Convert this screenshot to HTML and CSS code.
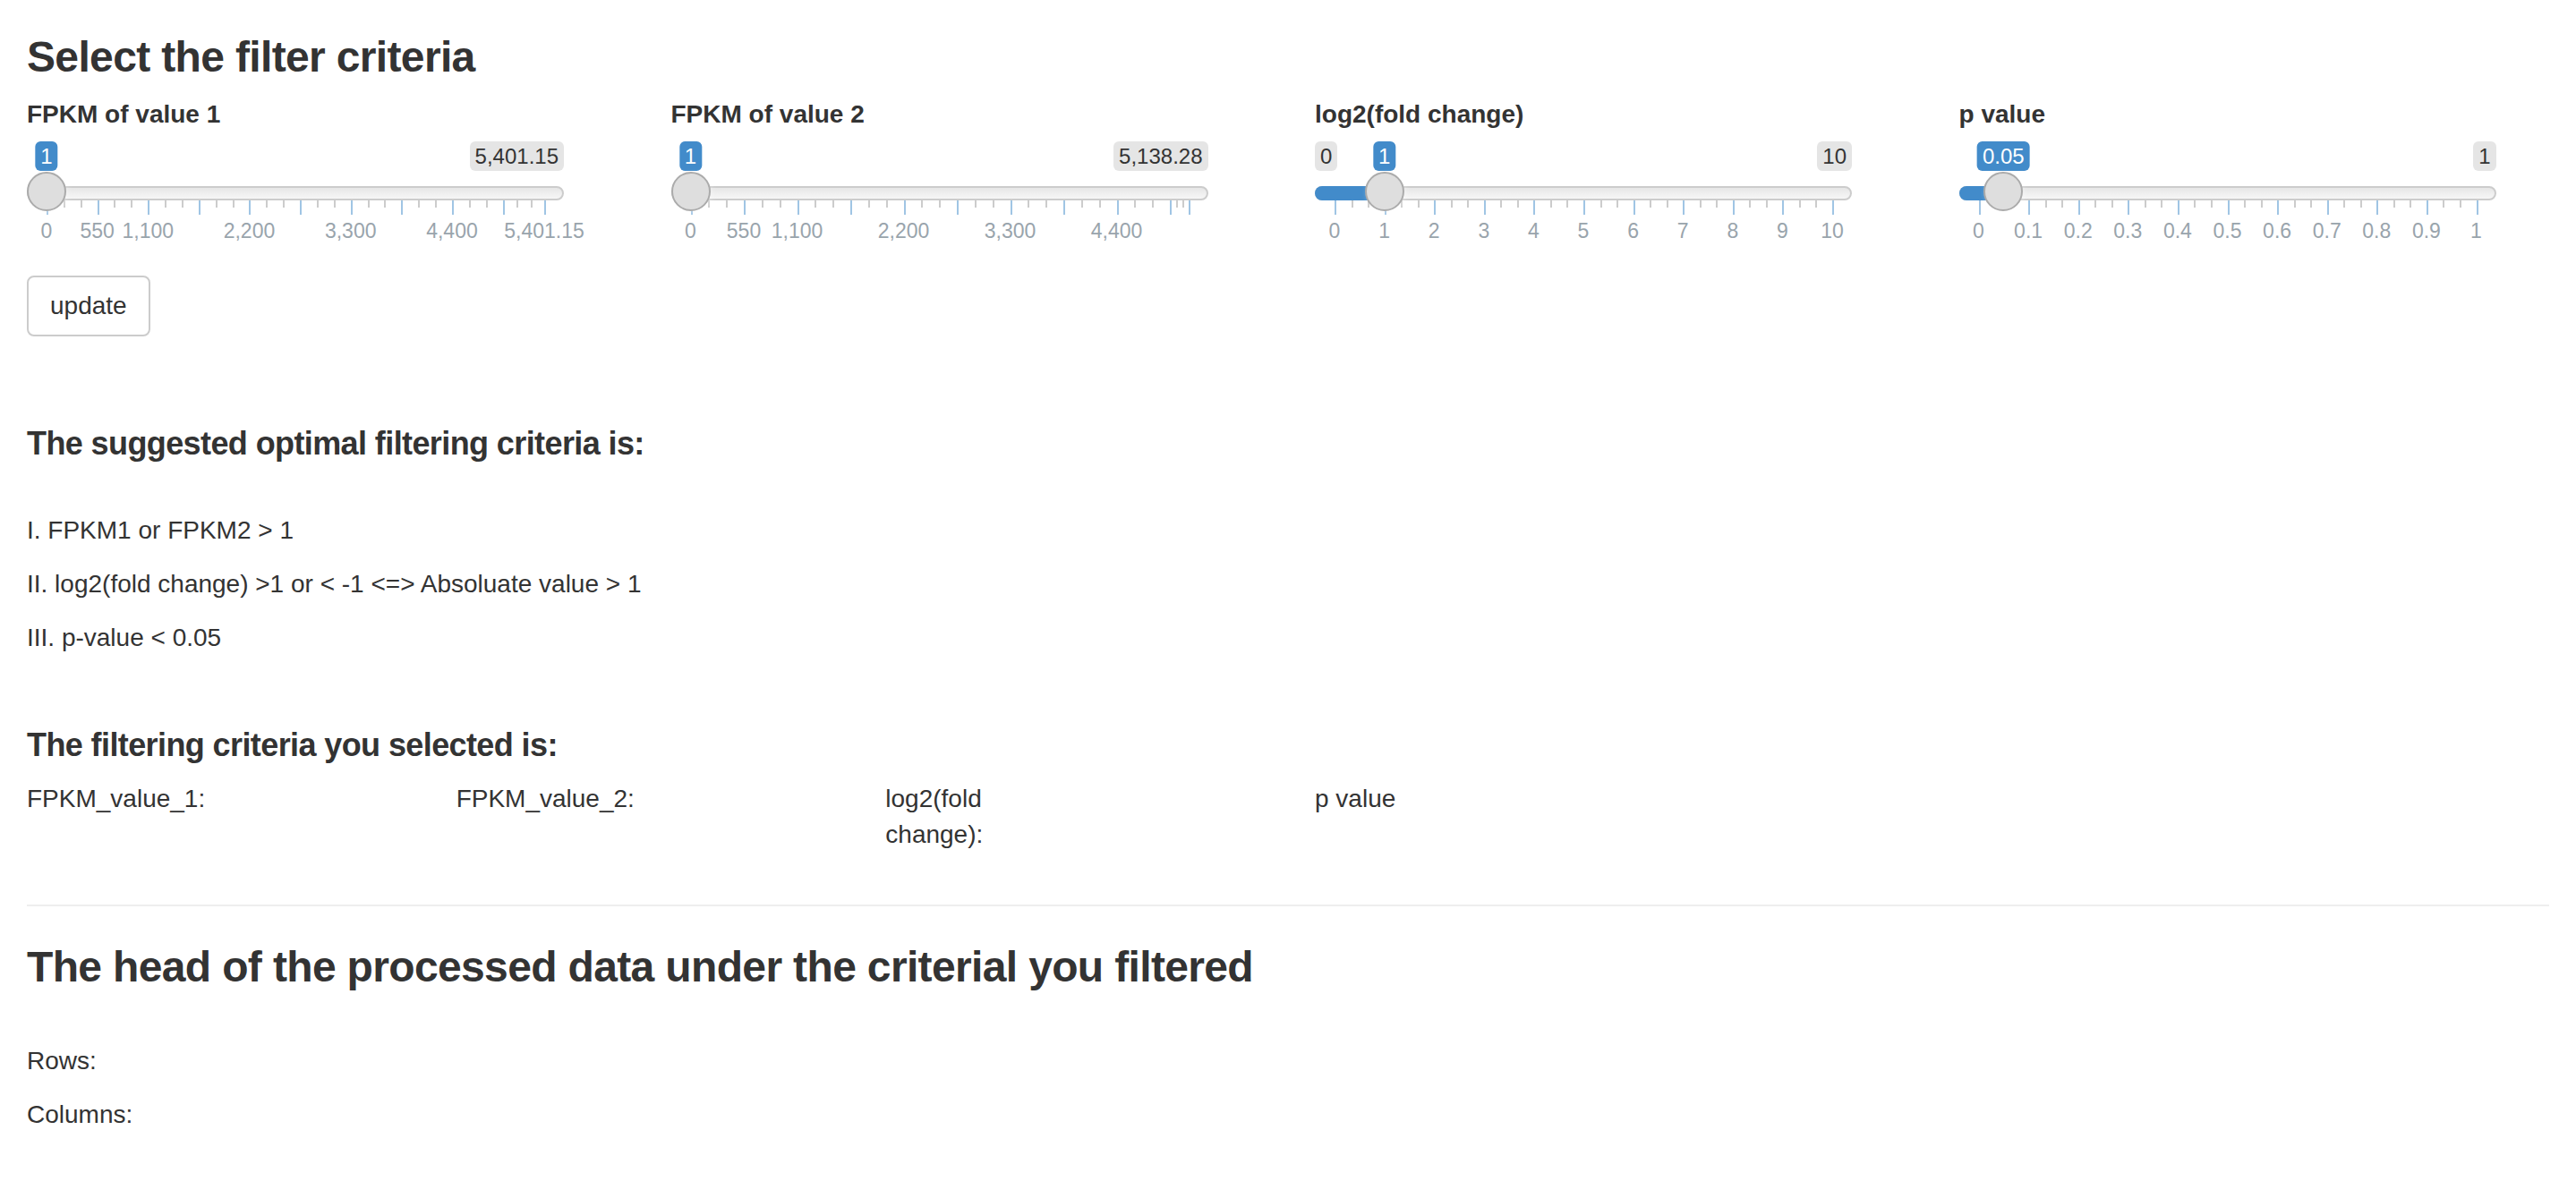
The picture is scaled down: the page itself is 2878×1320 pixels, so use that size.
FILE: index.html
```html
<!DOCTYPE html>
<html lang="en">
<head>
<meta charset="utf-8">
<title>Filter criteria</title>
<link rel="stylesheet" href="styles.css">
</head>
<body>
<div class="page">
  <h3 class="title">Select the filter criteria</h3>

  <div class="slider-row">
    <div class="slider-col">
      <div class="field">
        <label class="field-label">FPKM of value 1</label>
        <div class="irs">
          <span class="irs-line"></span>
          <span class="irs-max">5,401.15</span>
          <span class="irs-single" style="left:22px">1</span>
          <span class="irs-handle" style="left:0px"></span>
          <span class="irs-grid">
            <span class="tick" style="left:0%"></span>
            <span class="tick small" style="left:3.394%"></span>
            <span class="tick small" style="left:6.789%"></span>
            <span class="tick" style="left:10.183%"></span>
            <span class="tick small" style="left:13.577%"></span>
            <span class="tick small" style="left:16.972%"></span>
            <span class="tick" style="left:20.366%"></span>
            <span class="tick small" style="left:23.760%"></span>
            <span class="tick small" style="left:27.155%"></span>
            <span class="tick" style="left:30.549%"></span>
            <span class="tick small" style="left:33.943%"></span>
            <span class="tick small" style="left:37.338%"></span>
            <span class="tick" style="left:40.732%"></span>
            <span class="tick small" style="left:44.126%"></span>
            <span class="tick small" style="left:47.521%"></span>
            <span class="tick" style="left:50.915%"></span>
            <span class="tick small" style="left:54.309%"></span>
            <span class="tick small" style="left:57.704%"></span>
            <span class="tick" style="left:61.098%"></span>
            <span class="tick small" style="left:64.492%"></span>
            <span class="tick small" style="left:67.887%"></span>
            <span class="tick" style="left:71.281%"></span>
            <span class="tick small" style="left:74.675%"></span>
            <span class="tick small" style="left:78.070%"></span>
            <span class="tick" style="left:81.464%"></span>
            <span class="tick small" style="left:84.858%"></span>
            <span class="tick small" style="left:88.253%"></span>
            <span class="tick" style="left:91.647%"></span>
            <span class="tick small" style="left:94.431%"></span>
            <span class="tick small" style="left:97.216%"></span>
            <span class="tick" style="left:100%"></span>
            <span class="tick-label" style="left:0%">0</span>
            <span class="tick-label" style="left:10.183%">550</span>
            <span class="tick-label" style="left:20.366%">1,100</span>
            <span class="tick-label" style="left:40.732%">2,200</span>
            <span class="tick-label" style="left:61.098%">3,300</span>
            <span class="tick-label" style="left:81.464%">4,400</span>
            <span class="tick-label" style="left:100%">5,401.15</span>
          </span>
        </div>
      </div>
    </div>

    <div class="slider-col">
      <div class="field">
        <label class="field-label">FPKM of value 2</label>
        <div class="irs">
          <span class="irs-line"></span>
          <span class="irs-max">5,138.28</span>
          <span class="irs-single" style="left:22px">1</span>
          <span class="irs-handle" style="left:0px"></span>
          <span class="irs-grid">
            <span class="tick" style="left:0%"></span>
            <span class="tick small" style="left:3.568%"></span>
            <span class="tick small" style="left:7.136%"></span>
            <span class="tick" style="left:10.704%"></span>
            <span class="tick small" style="left:14.272%"></span>
            <span class="tick small" style="left:17.840%"></span>
            <span class="tick" style="left:21.408%"></span>
            <span class="tick small" style="left:24.976%"></span>
            <span class="tick small" style="left:28.544%"></span>
            <span class="tick" style="left:32.112%"></span>
            <span class="tick small" style="left:35.680%"></span>
            <span class="tick small" style="left:39.248%"></span>
            <span class="tick" style="left:42.816%"></span>
            <span class="tick small" style="left:46.384%"></span>
            <span class="tick small" style="left:49.952%"></span>
            <span class="tick" style="left:53.520%"></span>
            <span class="tick small" style="left:57.088%"></span>
            <span class="tick small" style="left:60.656%"></span>
            <span class="tick" style="left:64.224%"></span>
            <span class="tick small" style="left:67.792%"></span>
            <span class="tick small" style="left:71.360%"></span>
            <span class="tick" style="left:74.928%"></span>
            <span class="tick small" style="left:78.496%"></span>
            <span class="tick small" style="left:82.064%"></span>
            <span class="tick" style="left:85.632%"></span>
            <span class="tick small" style="left:89.200%"></span>
            <span class="tick small" style="left:92.768%"></span>
            <span class="tick" style="left:96.336%"></span>
            <span class="tick small" style="left:97.557%"></span>
            <span class="tick small" style="left:98.779%"></span>
            <span class="tick" style="left:100%"></span>
            <span class="tick-label" style="left:0%">0</span>
            <span class="tick-label" style="left:10.704%">550</span>
            <span class="tick-label" style="left:21.408%">1,100</span>
            <span class="tick-label" style="left:42.816%">2,200</span>
            <span class="tick-label" style="left:64.224%">3,300</span>
            <span class="tick-label" style="left:85.632%">4,400</span>
          </span>
        </div>
      </div>
    </div>

    <div class="slider-col">
      <div class="field">
        <label class="field-label">log2(fold change)</label>
        <div class="irs">
          <span class="irs-line"></span>
          <span class="irs-bar" style="width:77.6px"></span>
          <span class="irs-min">0</span>
          <span class="irs-max">10</span>
          <span class="irs-single" style="left:77.6px">1</span>
          <span class="irs-handle" style="left:55.6px"></span>
          <span class="irs-grid">
            <span class="tick" style="left:0%"></span>
            <span class="tick small" style="left:3.333%"></span>
            <span class="tick small" style="left:6.667%"></span>
            <span class="tick" style="left:10%"></span>
            <span class="tick small" style="left:13.333%"></span>
            <span class="tick small" style="left:16.667%"></span>
            <span class="tick" style="left:20%"></span>
            <span class="tick small" style="left:23.333%"></span>
            <span class="tick small" style="left:26.667%"></span>
            <span class="tick" style="left:30%"></span>
            <span class="tick small" style="left:33.333%"></span>
            <span class="tick small" style="left:36.667%"></span>
            <span class="tick" style="left:40%"></span>
            <span class="tick small" style="left:43.333%"></span>
            <span class="tick small" style="left:46.667%"></span>
            <span class="tick" style="left:50%"></span>
            <span class="tick small" style="left:53.333%"></span>
            <span class="tick small" style="left:56.667%"></span>
            <span class="tick" style="left:60%"></span>
            <span class="tick small" style="left:63.333%"></span>
            <span class="tick small" style="left:66.667%"></span>
            <span class="tick" style="left:70%"></span>
            <span class="tick small" style="left:73.333%"></span>
            <span class="tick small" style="left:76.667%"></span>
            <span class="tick" style="left:80%"></span>
            <span class="tick small" style="left:83.333%"></span>
            <span class="tick small" style="left:86.667%"></span>
            <span class="tick" style="left:90%"></span>
            <span class="tick small" style="left:93.333%"></span>
            <span class="tick small" style="left:96.667%"></span>
            <span class="tick" style="left:100%"></span>
            <span class="tick-label" style="left:0%">0</span>
            <span class="tick-label" style="left:10%">1</span>
            <span class="tick-label" style="left:20%">2</span>
            <span class="tick-label" style="left:30%">3</span>
            <span class="tick-label" style="left:40%">4</span>
            <span class="tick-label" style="left:50%">5</span>
            <span class="tick-label" style="left:60%">6</span>
            <span class="tick-label" style="left:70%">7</span>
            <span class="tick-label" style="left:80%">8</span>
            <span class="tick-label" style="left:90%">9</span>
            <span class="tick-label" style="left:100%">10</span>
          </span>
        </div>
      </div>
    </div>

    <div class="slider-col">
      <div class="field">
        <label class="field-label">p value</label>
        <div class="irs">
          <span class="irs-line"></span>
          <span class="irs-bar" style="width:49.8px"></span>
          <span class="irs-max">1</span>
          <span class="irs-single" style="left:49.8px">0.05</span>
          <span class="irs-handle" style="left:27.8px"></span>
          <span class="irs-grid">
            <span class="tick" style="left:0%"></span>
            <span class="tick small" style="left:3.333%"></span>
            <span class="tick small" style="left:6.667%"></span>
            <span class="tick" style="left:10%"></span>
            <span class="tick small" style="left:13.333%"></span>
            <span class="tick small" style="left:16.667%"></span>
            <span class="tick" style="left:20%"></span>
            <span class="tick small" style="left:23.333%"></span>
            <span class="tick small" style="left:26.667%"></span>
            <span class="tick" style="left:30%"></span>
            <span class="tick small" style="left:33.333%"></span>
            <span class="tick small" style="left:36.667%"></span>
            <span class="tick" style="left:40%"></span>
            <span class="tick small" style="left:43.333%"></span>
            <span class="tick small" style="left:46.667%"></span>
            <span class="tick" style="left:50%"></span>
            <span class="tick small" style="left:53.333%"></span>
            <span class="tick small" style="left:56.667%"></span>
            <span class="tick" style="left:60%"></span>
            <span class="tick small" style="left:63.333%"></span>
            <span class="tick small" style="left:66.667%"></span>
            <span class="tick" style="left:70%"></span>
            <span class="tick small" style="left:73.333%"></span>
            <span class="tick small" style="left:76.667%"></span>
            <span class="tick" style="left:80%"></span>
            <span class="tick small" style="left:83.333%"></span>
            <span class="tick small" style="left:86.667%"></span>
            <span class="tick" style="left:90%"></span>
            <span class="tick small" style="left:93.333%"></span>
            <span class="tick small" style="left:96.667%"></span>
            <span class="tick" style="left:100%"></span>
            <span class="tick-label" style="left:0%">0</span>
            <span class="tick-label" style="left:10%">0.1</span>
            <span class="tick-label" style="left:20%">0.2</span>
            <span class="tick-label" style="left:30%">0.3</span>
            <span class="tick-label" style="left:40%">0.4</span>
            <span class="tick-label" style="left:50%">0.5</span>
            <span class="tick-label" style="left:60%">0.6</span>
            <span class="tick-label" style="left:70%">0.7</span>
            <span class="tick-label" style="left:80%">0.8</span>
            <span class="tick-label" style="left:90%">0.9</span>
            <span class="tick-label" style="left:100%">1</span>
          </span>
        </div>
      </div>
    </div>
  </div>

  <button class="btn" type="button">update</button>

  <h4 class="sub sub-suggested">The suggested optimal filtering criteria is:</h4>
  <p class="crit">I. FPKM1 or FPKM2 &gt; 1</p>
  <p class="crit">II. log2(fold change) &gt;1 or &lt; -1 &lt;=&gt; Absoluate value &gt; 1</p>
  <p class="crit">III. p-value &lt; 0.05</p>

  <h4 class="sub sub-selected">The filtering criteria you selected is:</h4>
  <div class="sel-row">
    <div class="sel-cell"><div class="sel-label">FPKM_value_1:</div></div>
    <div class="sel-cell"><div class="sel-label">FPKM_value_2:</div></div>
    <div class="sel-cell"><div class="sel-label">log2(fold change):</div></div>
    <div class="sel-cell"><div class="sel-label">p value</div></div>
  </div>

  <hr class="divider">

  <h3 class="head">The head of the processed data under the criterial you filtered</h3>
  <p class="stat">Rows:</p>
  <p class="stat">Columns:</p>
</div>
</body>
</html>
```

FILE: styles.css
```css
* {
  box-sizing: border-box;
}

html,
body {
  margin: 0;
  padding: 0;
}

body {
  font-family: "Liberation Sans", Arial, Helvetica, sans-serif;
  font-size: 28px;
  line-height: 40px;
  color: #333333;
  background: #ffffff;
}

.page {
  padding: 0 30px;
}

.title {
  font-size: 48px;
  line-height: 52.8px;
  font-weight: 700;
  letter-spacing: -0.65px;
  margin: 38px 0 17px;
}

/* slider row: four equal columns */
.slider-row {
  display: grid;
  grid-template-columns: repeat(4, 1fr);
  margin: 0 -30px;
}

.slider-col {
  padding: 0 30px;
  min-width: 0;
}

.field {
  width: 600px;
  max-width: 100%;
  margin-bottom: 30px;
}

.field-label {
  display: inline-block;
  font-weight: 700;
  margin-bottom: 10px;
}

/* ion range slider, shiny skin */
.irs {
  position: relative;
  display: block;
  height: 120px;
}

.irs-line {
  position: absolute;
  left: 0;
  right: 0;
  top: 50px;
  height: 16px;
  border: 2px solid #cccccc;
  border-radius: 16px;
  background: linear-gradient(to bottom, #dedede -50%, #ffffff 150%);
}

.irs-bar {
  position: absolute;
  left: 0;
  top: 50px;
  height: 16px;
  background: #428bca;
  border-radius: 16px 0 0 16px;
}

.irs-min,
.irs-max {
  position: absolute;
  top: 0;
  padding: 2px 6px;
  font-size: 24px;
  line-height: 29px;
  color: #333333;
  background: rgba(0, 0, 0, 0.1);
  border-radius: 6px;
  white-space: nowrap;
}

.irs-min {
  left: 0;
}

.irs-max {
  right: 0;
}

.irs-single {
  position: absolute;
  top: 0;
  transform: translateX(-50%);
  padding: 2px 6px;
  font-size: 24px;
  line-height: 29px;
  color: #ffffff;
  background: #428bca;
  border-radius: 6px;
  white-space: nowrap;
}

.irs-handle {
  position: absolute;
  top: 34px;
  width: 44px;
  height: 44px;
  border: 2px solid #ababab;
  background: #dedede;
  border-radius: 50%;
  box-shadow: 2px 2px 6px rgba(255, 255, 255, 0.3);
  z-index: 2;
}

.irs-grid {
  position: absolute;
  left: 22px;
  right: 22px;
  top: 66px;
  height: 54px;
}

.tick {
  position: absolute;
  top: 0;
  width: 2px;
  height: 16px;
  background: #428bca;
  opacity: 0.5;
}

.tick.small {
  height: 8px;
  background: #999999;
}

.tick-label {
  position: absolute;
  top: 22px;
  transform: translateX(-50%);
  font-size: 23px;
  line-height: 24px;
  color: #99a4ac;
  white-space: nowrap;
}

/* button */
.btn {
  display: inline-block;
  font-family: inherit;
  font-size: 28px;
  line-height: 40px;
  padding: 12px 24px;
  border: 2px solid #cccccc;
  border-radius: 8px;
  background: #ffffff;
  color: #333333;
  cursor: pointer;
  margin: 0;
}

/* text sections */
.sub {
  font-size: 36px;
  line-height: 39.6px;
  font-weight: 700;
  letter-spacing: -0.6px;
  margin: 20px 0;
}

.sub-suggested {
  margin-top: 100px;
  margin-bottom: 58px;
}

.sub-selected {
  margin-top: 80px;
  margin-bottom: 20px;
}

.crit,
.stat {
  margin: 0 0 20px;
}

.sel-row {
  display: grid;
  grid-template-columns: repeat(6, 1fr);
  margin: 0 -30px;
}

.sel-cell {
  padding: 0 30px;
  min-width: 0;
}

.sel-label {
  width: 180px;
}

.divider {
  margin: 58px 0 40px;
  border: 0;
  border-top: 2px solid #eeeeee;
}

.head {
  font-size: 48px;
  line-height: 52.8px;
  font-weight: 700;
  letter-spacing: -0.65px;
  margin: 42px 0 58px;
}
```
